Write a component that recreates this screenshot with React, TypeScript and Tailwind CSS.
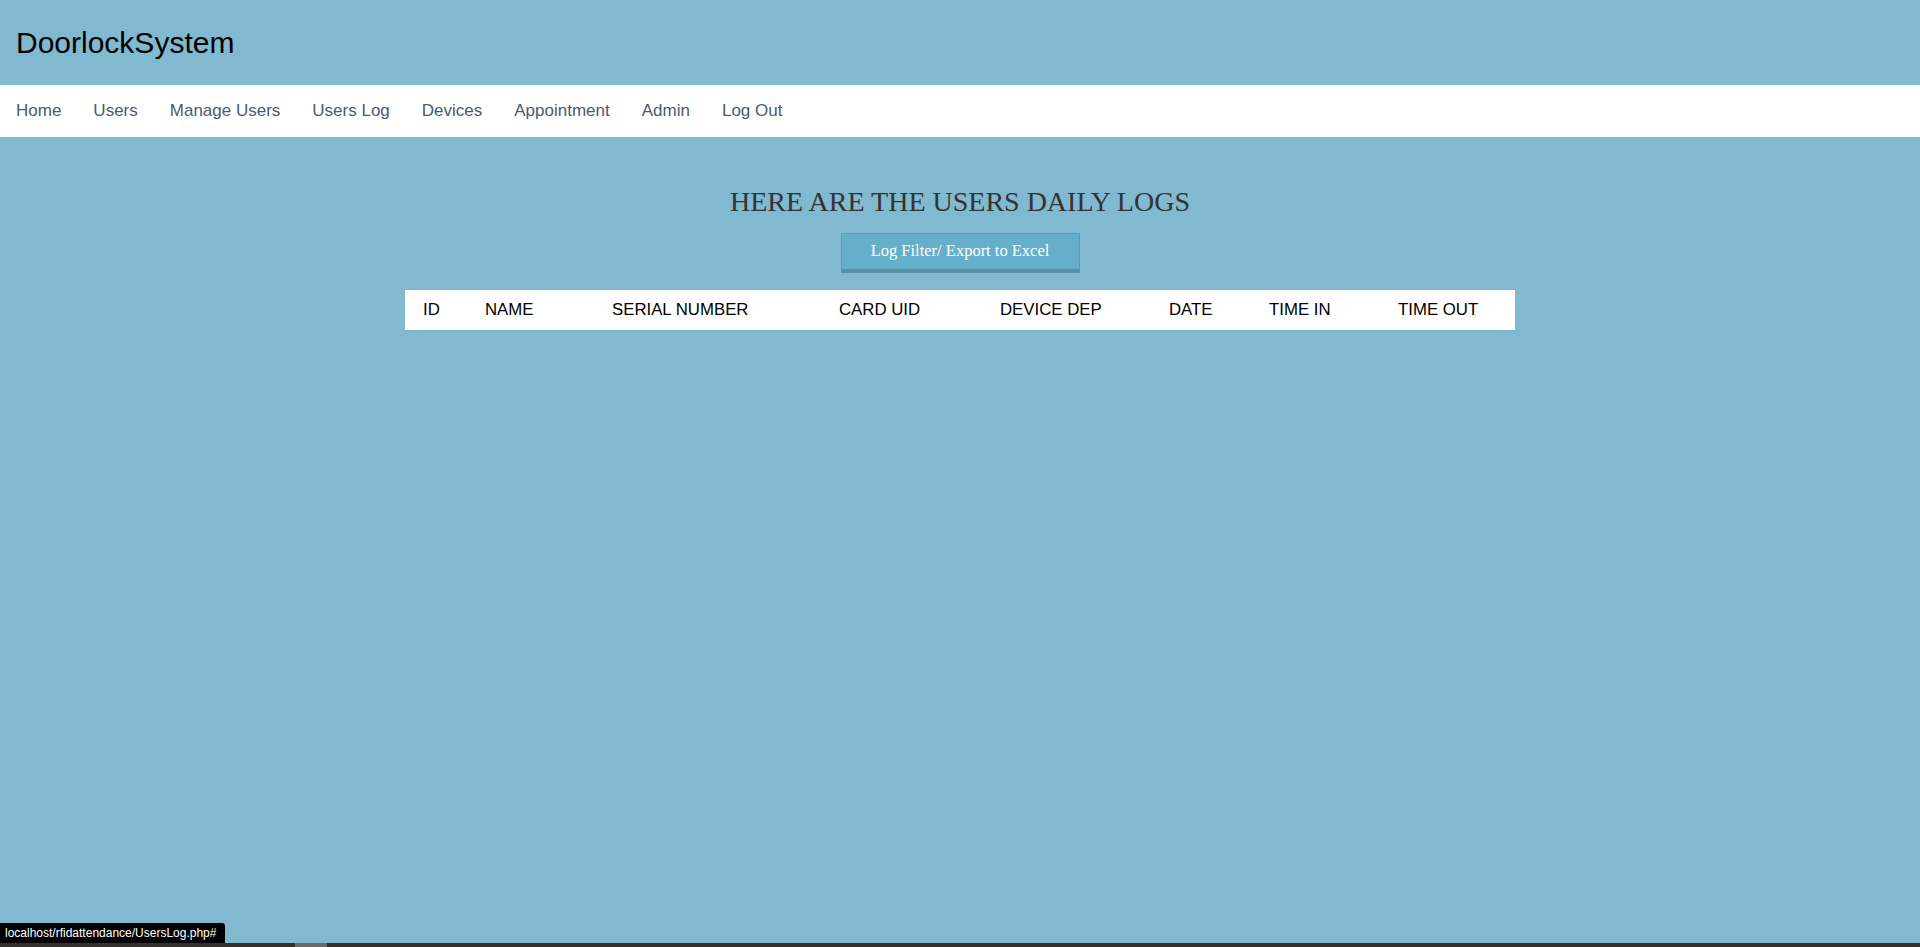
const navItems = ["Home", "Users", "Manage Users", "Users Log", "Devices", "Appointment", "Admin", "Log Out"];

const columns = [
  { label: "ID", w: "w-[62px]" },
  { label: "NAME", w: "w-[127px]" },
  { label: "SERIAL NUMBER", w: "w-[227px]" },
  { label: "CARD UID", w: "w-[161px]" },
  { label: "DEVICE DEP", w: "w-[169px]" },
  { label: "DATE", w: "w-[100px]" },
  { label: "TIME IN", w: "w-[129px]" },
  { label: "TIME OUT", w: "w-[135px]" },
];

export default function App() {
  return (
    <div className="relative h-[947px] w-full overflow-hidden bg-[#80b9d0] font-['Liberation_Sans',Arial,sans-serif]">
      {/* Header */}
      <header className="flex h-[85px] items-center pl-4">
        <h1 className="text-[30px] leading-none text-black">DoorlockSystem</h1>
      </header>

      {/* Nav */}
      <nav className="flex h-[52px] items-center bg-white">
        {navItems.map((item) => (
          <a key={item} href="#" className="px-4 text-[17px] text-[#4a5a70]">
            {item}
          </a>
        ))}
      </nav>

      {/* Content */}
      <main className="flex flex-col items-center">
        <h2 className="mt-[49px] text-[28px] leading-[32px] text-[#333333] font-['Liberation_Serif','Times_New_Roman',serif]">
          HERE ARE THE USERS DAILY LOGS
        </h2>
        <button className="mt-[15px] flex h-[40px] w-[239px] items-center justify-center border border-b-4 border-[#5a9bb4] border-b-[#5790a7] bg-[#66afcb] text-[16.5px] text-white font-['Liberation_Serif','Times_New_Roman',serif]">
          Log Filter/ Export to Excel
        </button>
        <div className="mt-[17px] flex h-[40px] w-[1110px] items-center bg-white">
          {columns.map((c) => (
            <div key={c.label} className={`${c.w} pl-[18px] text-[16.8px] text-black`}>
              {c.label}
            </div>
          ))}
        </div>
      </main>

      {/* Browser status link */}
      <div className="absolute bottom-[4px] left-0 flex h-[20px] w-[225px] items-center rounded-tr-[3px] bg-black pl-[5px] text-[12px] text-white">
        localhost/rfidattendance/UsersLog.php#
      </div>
      <div className="absolute bottom-0 left-0 flex h-[4px] w-full bg-[#34302d]">
        <div className="ml-[295px] h-full w-[32px] bg-[#6a6a6a]" />
      </div>
    </div>
  );
}
